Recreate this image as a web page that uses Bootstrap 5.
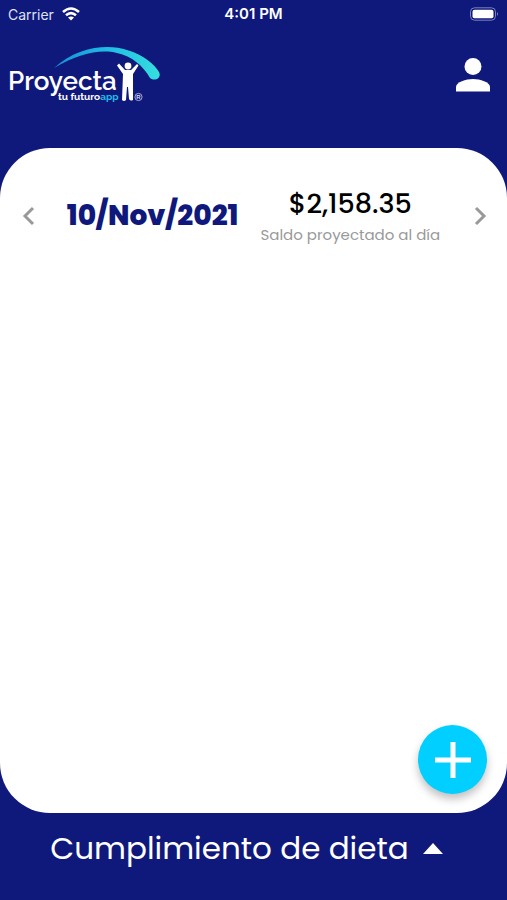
<!DOCTYPE html>
<html lang="es">
<head>
<meta charset="utf-8">
<meta name="viewport" content="width=device-width, initial-scale=1">
<title>Proyecta tu futuro</title>
<link href="https://cdn.jsdelivr.net/npm/bootstrap@5.3.0/dist/css/bootstrap.min.css" rel="stylesheet">
<style>
  body { background: #0f187b; font-family: Poppins, Inter, "Liberation Sans", sans-serif; }
  button { font-family: inherit; }
  .status-bar { height: 28px; font-size: 14px; font-family: Inter, sans-serif; color: #dfe2f5; }
  .clock { font-size: 15px; line-height: 20px; }
  .app-header { height: 120px; padding: 18px 16px 0 8px; }
  .logo-name { font: 600 26px Raleway, Lato, sans-serif; }
  .logo-tag { font: 700 10px Raleway, "Open Sans", sans-serif; }
  .logo-reg { font: 700 6px "Liberation Sans", sans-serif; }
  .panel { border-radius: 50px; padding: 37px 15px 19px; }
  .day-row { height: 62px; }
  .day-info { gap: 22px; }
  .icon-btn { border: 0; background: none; padding: 0; line-height: 1; }
  .day { font-size: 28px; line-height: 36px; font-weight: 800; color: #0f187b; }
  .amount { font-size: 27px; line-height: 38px; font-weight: 500; color: #000; }
  .caption { font-size: 15px; line-height: 24px; color: #999; }
  .fab { width: 69px; height: 69px; border: 0; background: #00cfff; box-shadow: 0 5px 8px rgba(0,0,0,.25); margin-right: 5px; }
  .sheet-toggle { height: 87px; padding: 0 14px 16px 0; font-size: 31px; gap: 14px; }
</style>
</head>
<body>
<div class="d-flex flex-column min-vh-100">
  <div class="status-bar row g-0 align-items-center px-2">
    <div class="col d-flex align-items-center gap-2">
      <span>Carrier</span>
      <svg width="18" height="14" viewBox="0 0 18 14" fill="none" stroke="#fff" stroke-width="2.6" aria-hidden="true"><path d="M1 5Q9-2 17 5M4 8.3Q9 4 14 8.3"/><path d="M9 13.5 6 10.5Q9 8.3 12 10.5Z" fill="#fff" stroke="none"/></svg>
    </div>
    <div class="clock col-auto fw-semibold text-white">4:01 PM</div>
    <div class="col d-flex justify-content-end">
      <svg width="30" height="14" viewBox="0 0 30 14" aria-label="Batería" role="img"><rect x="1.5" y=".8" width="25" height="12.4" rx="4" fill="none" stroke="#7d83bd"/><rect x="3.5" y="2.8" width="21" height="8.4" rx="2" fill="#fff"/><path d="M28 5q2 2 0 4z" fill="#7d83bd"/></svg>
    </div>
  </div>

  <header class="app-header d-flex justify-content-between align-items-start">
    <a href="#" aria-label="Proyecta tu futuro app">
      <svg class="d-block" width="154" height="60" viewBox="8 46 154 60">
        <defs><linearGradient id="arc"><stop offset="0" stop-color="#168fd8"/><stop offset=".5" stop-color="#20bbe5"/><stop offset="1" stop-color="#35dede"/></linearGradient></defs>
        <path d="M54 68C78 46 109 44 127 50C144 55 155 65 159 72C162 78 155 82 150 78C143 66 132 56 117 53C100 49 80 53 54 68Z" fill="url(#arc)"/>
        <text class="logo-name" x="8" y="90" fill="#fff">Proyecta</text>
        <text class="logo-tag" x="58" y="100" fill="#fff">tu futuro<tspan fill="#20bde8">app</tspan></text>
        <circle cx="128" cy="66" r="3.4" fill="#fff"/>
        <path d="M117 65.500 119 63.500 125 70H131L137 64 138.500 65.500 133 74V100Q130.500 101.500 129 99L128 87H127L126 100Q124 102 122 100L123 74Z" fill="#fff"/>
        <circle cx="138.500" cy="97" r="3.600" fill="none" stroke="#c6c9e6" stroke-width=".8"/>
        <text class="logo-reg" x="138.500" y="99" text-anchor="middle" fill="#d9dbef">R</text>
      </svg>
    </a>
    <button class="icon-btn mt-2 pt-1" type="button" aria-label="Perfil">
      <svg class="d-block" width="35" height="35" viewBox="0 0 35 35" fill="#fff"><circle cx="17" cy="8.500" r="8.500"/><path d="M0 33.500V29C0 24 10 21 17 21S34 24 34 29V33.500Z"/></svg>
    </button>
  </header>

  <main class="panel bg-white flex-grow-1 d-flex flex-column justify-content-between">
    <section class="day-row d-flex align-items-center justify-content-between">
      <button class="icon-btn" type="button" aria-label="Día anterior">
        <svg class="d-block" width="24" height="24" fill="none" stroke="#999" stroke-width="3"><path d="M18 4 10 12l8 8"/></svg>
      </button>
      <div class="day-info d-flex align-items-center text-nowrap">
        <div class="day">10/Nov/2021</div>
        <div class="text-center">
          <div class="amount">$2,158.35</div>
          <div class="caption">Saldo proyectado al día</div>
        </div>
      </div>
      <button class="icon-btn" type="button" aria-label="Día siguiente">
        <svg class="d-block" width="24" height="24" fill="none" stroke="#999" stroke-width="3"><path d="m8 4 8 8-8 8"/></svg>
      </button>
    </section>
    <button class="fab rounded-circle align-self-end d-flex align-items-center justify-content-center p-0" type="button" aria-label="Agregar">
      <svg width="36" height="36" stroke="#fff" stroke-width="5"><path d="M18 0v36M0 18h36"/></svg>
    </button>
  </main>

  <button class="icon-btn sheet-toggle text-white d-flex align-items-center justify-content-center" type="button" aria-expanded="false">
    <span>Cumplimiento de dieta</span>
    <svg width="20" height="11" fill="#fff" aria-hidden="true"><path d="M0 11 10 0l10 11z"/></svg>
  </button>
</div>
<script src="https://cdn.jsdelivr.net/npm/bootstrap@5.3.0/dist/js/bootstrap.bundle.min.js"></script>
</body>
</html>
